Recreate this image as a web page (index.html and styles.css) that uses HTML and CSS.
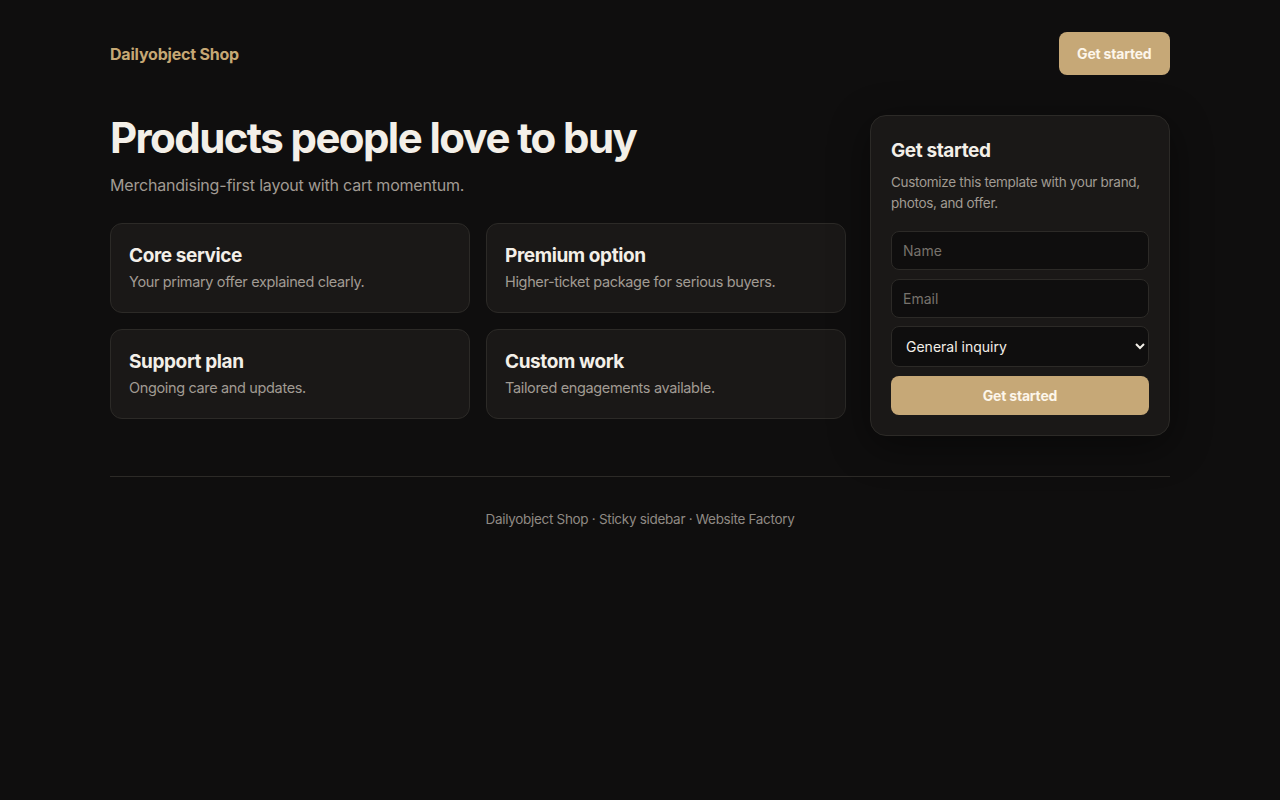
FILE: index.html
```html
<!DOCTYPE html>
<html lang="en">
<head>
  <meta charset="UTF-8">
  <meta name="viewport" content="width=device-width, initial-scale=1.0">
  <title>Dailyobject Shop</title>
  <link rel="stylesheet" href="styles.css">
</head>
<body>
  <div class="wrap">
    <header class="top">
      <a class="brand" href="#">Dailyobject Shop</a>
      <a class="btn" href="#">Get started</a>
    </header>

    <main class="layout">
      <section class="main-col">
        <h1>Products people love to buy</h1>
        <p class="lead">Merchandising-first layout with cart momentum.</p>

        <div class="cards">
          <div class="card">
            <h3>Core service</h3>
            <p>Your primary offer explained clearly.</p>
          </div>
          <div class="card">
            <h3>Premium option</h3>
            <p>Higher-ticket package for serious buyers.</p>
          </div>
          <div class="card">
            <h3>Support plan</h3>
            <p>Ongoing care and updates.</p>
          </div>
          <div class="card">
            <h3>Custom work</h3>
            <p>Tailored engagements available.</p>
          </div>
        </div>
      </section>

      <aside class="sidebar">
        <h2>Get started</h2>
        <p>Customize this template with your brand, photos, and offer.</p>
        <form class="form">
          <input type="text" placeholder="Name">
          <input type="email" placeholder="Email">
          <select>
            <option>General inquiry</option>
            <option>Wholesale</option>
            <option>Support</option>
          </select>
          <button type="button">Get started</button>
        </form>
      </aside>
    </main>

    <footer class="foot">
      <p>Dailyobject Shop · Sticky sidebar · Website Factory</p>
    </footer>
  </div>
</body>
</html>
```

FILE: styles.css
```css
/* Base */
* {
  box-sizing: border-box;
}
body {
  margin: 0;
  background-color: #0f0e0e;
  color: #f3efe8;
  font-family: 'Inter', 'Liberation Sans', sans-serif;
}
.wrap {
  width: 1060px;
  margin: 0 auto;
}

/* Header */
.top {
  display: flex;
  justify-content: space-between;
  align-items: center;
  padding-top: 32px;
}
.brand {
  color: #c6a874;
  font-size: 16px;
  font-weight: 700;
  text-decoration: none;
  letter-spacing: -0.2px;
}
.btn {
  display: inline-block;
  background-color: #c6a877;
  color: #fdf6ea;
  font-size: 14px;
  font-weight: 700;
  text-decoration: none;
  padding: 0 18.5px;
  height: 43px;
  line-height: 43px;
  border-radius: 8px;
  letter-spacing: -0.2px;
}

/* Main grid */
.layout {
  display: grid;
  grid-template-columns: 1fr 300px;
  gap: 24px;
  margin-top: 40px;
  align-items: start;
}
h1 {
  font-size: 42px;
  line-height: 46px;
  font-weight: 700;
  letter-spacing: -1.6px;
  margin: 0;
}
.lead {
  font-size: 16px;
  line-height: 24px;
  color: #a19b93;
  letter-spacing: -0.2px;
  margin: 12px 0 0;
}
.cards {
  display: grid;
  grid-template-columns: repeat(2, 1fr);
  gap: 16px;
  margin-top: 26px;
}
.card {
  background-color: #1a1817;
  border: 1px solid #2c2a27;
  border-radius: 12px;
  padding: 19px 18px 20px;
  height: 90px;
}
.card h3 {
  font-size: 19px;
  line-height: 26px;
  font-weight: 700;
  letter-spacing: -0.4px;
  margin: 0;
}
.card p {
  font-size: 14.5px;
  line-height: 22px;
  color: #a19b93;
  letter-spacing: -0.35px;
  margin: 2px 0 0;
}

/* Sidebar */
.sidebar {
  background-color: #1a1817;
  border: 1px solid #2c2a27;
  border-radius: 16px;
  padding: 21px 20px 20px;
  box-shadow: 0 10px 40px rgba(0, 0, 0, 0.45);
}
.sidebar h2 {
  font-size: 19px;
  line-height: 28px;
  font-weight: 700;
  letter-spacing: -0.4px;
  margin: 0;
}
.sidebar p {
  font-size: 13.5px;
  line-height: 21px;
  color: #a19b93;
  letter-spacing: -0.3px;
  margin: 7px 0 0;
}
.form {
  display: flex;
  flex-direction: column;
  gap: 9px;
  margin-top: 17px;
}
.form input,
.form select {
  background-color: #0f0e0e;
  border: 1px solid #2c2a27;
  border-radius: 8px;
  color: #f3efe8;
  font-family: inherit;
  font-size: 14px;
  height: 39px;
  padding: 0 11px;
  outline: none;
}
.form input::placeholder {
  color: #77726c;
}
.form select {
  height: 41px;
  margin-top: -1px;
  padding: 0 10px;
}
.form button {
  background-color: #c6a877;
  color: #fdf6ea;
  border: none;
  border-radius: 8px;
  font-family: inherit;
  font-size: 14px;
  font-weight: 700;
  height: 39px;
  letter-spacing: -0.2px;
  cursor: pointer;
}

/* Footer */
.foot {
  margin-top: 40px;
  border-top: 1px solid #2c2a27;
  text-align: center;
  padding-top: 34px;
}
.foot p {
  margin: 0;
  font-size: 13.5px;
  color: #8f8a84;
  letter-spacing: -0.3px;
}
```
